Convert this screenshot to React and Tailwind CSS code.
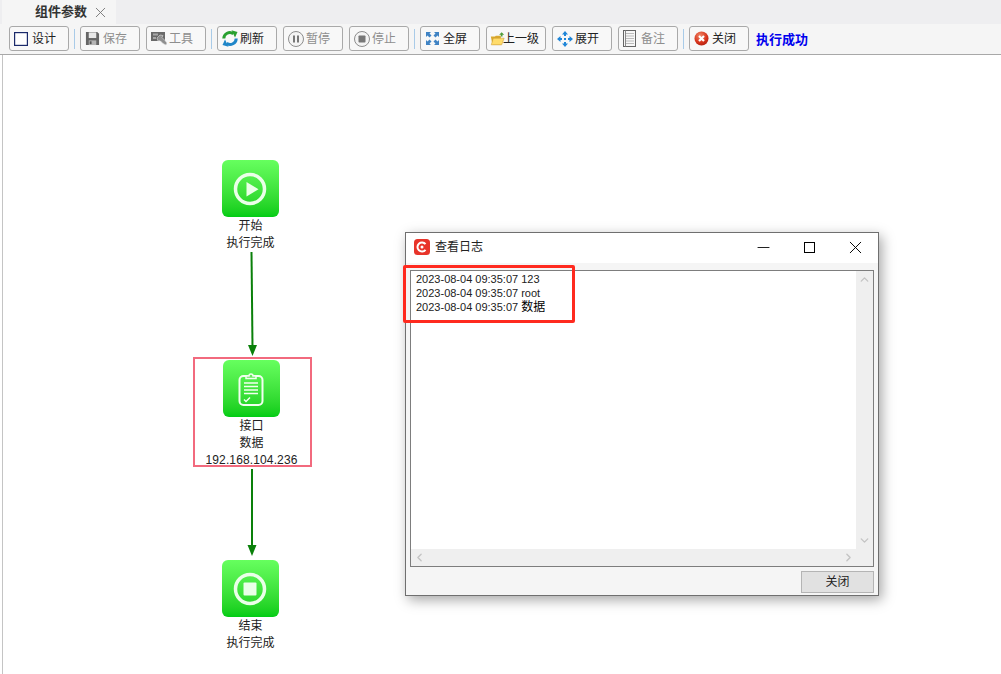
import React from 'react';
import { X, Minus, ChevronUp, ChevronDown, ChevronLeft, ChevronRight } from 'lucide-react';

const font = 'font-["Liberation_Sans","Noto_Sans_CJK_SC",sans-serif]';

const DesignIcon = () => (
  <svg width="14" height="14" viewBox="0 0 14 14" className="shrink-0"><rect x=".6" y=".6" width="12.800" height="12.800" fill="#fff" stroke="#1b2a6b" strokeWidth="1.200" /></svg>
);
const SaveIcon = () => (
  <svg width="15" height="15" viewBox="0 0 16 16" className="shrink-0">
    <path d="M1 1h12l2 2v12H1z" fill="#666" />
    <rect x="4" y="1.500" width="8" height="6" fill="#e8e8e8" />
    <rect x="4" y="10" width="8" height="5" fill="#b5b5b5" />
    <rect x="5" y="11" width="2" height="3" fill="#555" />
  </svg>
);
const ToolsIcon = () => (
  <svg width="16" height="15" viewBox="0 0 16 15" className="shrink-0">
    <path d="M0 1h14v9H0z" fill="#6a6a6a" />
    <path d="M2 2.500h5v2H2zM2 6h3v2H2z" fill="#a8a8a8" />
    <path d="M6 7l3-3 3 .5-1 2 2.500 2.500L16 12l-1 2-3-1.500-3-3-2 .5z" fill="#8f8f8f" stroke="#dedede" strokeWidth=".6" />
  </svg>
);
const RefreshIcon = () => (
  <svg width="16" height="17" viewBox="0 0 16 17" fill="none" className="shrink-0">
    <path d="M1.800 8.500a6 6 0 0 1 9.500-4.800" stroke="#28a02f" strokeWidth="3" />
    <path d="M9.500 .3l6 1.700-2.500 5.500z" fill="#28a02f" />
    <path d="M14.200 8.500a6 6 0 0 1-9.500 4.800" stroke="#1f86c8" strokeWidth="3" />
    <path d="M6.500 16.700l-6-1.700 2.500-5.500z" fill="#1f86c8" />
  </svg>
);
const PauseIcon = () => (
  <svg width="16" height="16" viewBox="0 0 16 16" className="shrink-0">
    <circle cx="8" cy="8" r="7.500" fill="#f4f4f4" stroke="#8d8d8d" />
    <rect x="5" y="4.500" width="2" height="7" fill="#777" />
    <rect x="9" y="4.500" width="2" height="7" fill="#777" />
  </svg>
);
const StopIcon = () => (
  <svg width="16" height="16" viewBox="0 0 16 16" className="shrink-0">
    <circle cx="8" cy="8" r="7.500" fill="#f4f4f4" stroke="#8d8d8d" />
    <rect x="4.500" y="4.500" width="7" height="7" rx=".8" fill="#777" />
  </svg>
);
const FullIcon = () => (
  <svg width="15" height="15" viewBox="0 0 15 15" fill="#3f83c4" className="shrink-0">
    <path d="M1 1h5L4.500 2.500 6.500 4.500 4.500 6.500 2.500 4.500 1 6z" />
    <path d="M14 1v5L12.500 4.500 10.500 6.500 8.500 4.500 10.500 2.500 9 1z" />
    <path d="M1 14V9l1.500 1.500 2-2 2 2-2 2L6 14z" />
    <path d="M14 14H9l1.500-1.500-2-2 2-2 2 2L14 9z" />
  </svg>
);
const FolderIcon = () => (
  <svg width="15" height="16" viewBox="0 0 18 18" className="shrink-0">
    <path d="M1 6h5l1-1h6v11H3z" fill="#d9a92e" />
    <path d="M1.500 16l2.500-8h13l-3 8z" fill="#ffdc6b" stroke="#c9962a" strokeWidth=".6" />
    <path d="M11 4l3-3 3 3h-2v2h-2V4z" fill="#4f9d3a" />
  </svg>
);
const MoveIcon = () => (
  <svg width="16" height="16" viewBox="0 0 16 16" fill="#1f86d8" className="shrink-0">
    <path d="M8 0l3 3.500H5zM8 16l-3-3.500h6zM0 8l3.500-3v6zM16 8l-3.500 3V5z" />
    <rect x="7" y="3" width="2" height="2" />
    <rect x="7" y="11" width="2" height="2" />
    <rect x="3" y="7" width="2" height="2" />
    <rect x="11" y="7" width="2" height="2" />
    <rect x="7" y="7" width="2" height="2" />
  </svg>
);
const NoteIcon = () => (
  <svg width="14" height="17" viewBox="0 0 14 17" fill="none" className="shrink-0">
    <rect x=".5" y=".5" width="12" height="16" fill="#f7f7f7" stroke="#666" />
    <path d="M2 3.500h9M2 6h9M2 8.500h9M2 11h9M2 13.500h9" stroke="#bbb" />
    <path d="M2.500 .5v16" stroke="#888" />
  </svg>
);
const CloseIcon = () => (
  <svg width="15" height="15" viewBox="0 0 15 15" className="shrink-0">
    <defs>
      <radialGradient id="redBall" cx=".4" cy=".3" r=".8"><stop offset="0" stopColor="#f08a6a" /><stop offset=".6" stopColor="#d8341c" /><stop offset="1" stopColor="#a81e10" /></radialGradient>
    </defs>
    <circle cx="7.500" cy="7.500" r="7" fill="url(#redBall)" />
    <path d="M5 5l5 5M10 5l-5 5" stroke="#fff" strokeWidth="2.200" />
  </svg>
);

const tools = [
  { label: '设计', icon: DesignIcon },
  { label: '保存', icon: SaveIcon, off: true, sep: true },
  { label: '工具', icon: ToolsIcon, off: true },
  { label: '刷新', icon: RefreshIcon, sep: true },
  { label: '暂停', icon: PauseIcon, off: true },
  { label: '停止', icon: StopIcon, off: true },
  { label: '全屏', icon: FullIcon, sep: true },
  { label: '上一级', icon: FolderIcon, narrow: true },
  { label: '展开', icon: MoveIcon },
  { label: '备注', icon: NoteIcon, off: true },
  { label: '关闭', icon: CloseIcon, sep: true },
];

function ToolButton({ item }) {
  const Icon = item.icon;
  return (
    <button className={`flex h-[25px] w-[60px] shrink-0 items-center rounded-[3px] border border-[#a9a9a9] bg-[#f8f8f8] pl-[3px] text-[12px] ${item.off ? 'text-[#8e8e8e]' : 'text-[#222]'}`}>
      {/* the label starts at the same offset on every button, except 上一级 */}
      <span className={`flex shrink-0 ${item.narrow ? 'w-[13px]' : 'w-[19px] pl-px'}`}>
        <Icon />
      </span>
      <span>{item.label}</span>
    </button>
  );
}

function Node({ pos, children, lines }) {
  return (
    <div className={`absolute flex w-[110px] flex-col items-center text-[12px] leading-[17px] text-[#222] ${pos}`}>
      <div className="flex h-[57px] w-[57px] items-center justify-center rounded-[6px] bg-gradient-to-b from-[#66ff5e] to-[#00cc14]">
        {children}
      </div>
      <div className="mt-[1px] pl-[1px] text-center">
        {lines.map((l, i) => <div key={i}>{l}</div>)}
      </div>
    </div>
  );
}

export default function App() {
  return (
    <div className={`${font} flex h-[674px] w-[1001px] flex-col overflow-hidden bg-white`}>
      {/* tabs */}
      <div className="flex h-[24px] shrink-0 bg-[#eeeef0] pl-[2px]">
        <div className="flex h-full w-[114px] items-center bg-[#f5f5f5] pl-[33px] text-[13px] font-bold text-[#333]">
          <span>组件参数</span>
          <X size={17} strokeWidth={1.3} className="ml-[5px] text-[#777]" />
        </div>
      </div>

      {/* toolbar */}
      <div className="flex h-[31px] shrink-0 items-start gap-[6px] border-b border-[#a8a8a8] bg-[#f5f5f5] pl-[9px] pt-[2px]">
        {tools.map((t) => (
          <React.Fragment key={t.label}>
            {t.sep && <div className="-mx-px mt-[3px] h-[20px] w-px bg-[#a9cbe8]" />}
            <ToolButton item={t} />
          </React.Fragment>
        ))}
        <span className="ml-px mt-[4px] text-[13px] font-bold text-[#0000ee]">执行成功</span>
      </div>

      {/* canvas */}
      <div className="relative ml-[2px] flex-1 border-l border-[#c4c4c4] bg-white">
        <svg className="absolute left-[-3px] top-[-55px]" width="1001" height="674" fill="none">
          <path d="M251.500 252l1 94" stroke="#0a800a" strokeWidth="2" />
          <path d="M248 345h9l-4.500 11z" fill="#0a800a" />
          <path d="M252 469v77" stroke="#0a800a" strokeWidth="2" />
          <path d="M247.500 545h9l-4.500 11z" fill="#0a800a" />
        </svg>

        <Node pos="left-[192px] top-[105px]" lines={['开始', '执行完成']}>
          <svg width="34" height="34" viewBox="0 0 34 34" fill="none">
            <circle cx="17" cy="17" r="14.500" stroke="#eaffe8" strokeWidth="3.500" />
            <path d="M13.500 10L25.500 17.200l-12 7.300z" fill="#eaffe8" />
          </svg>
        </Node>

        <div className="absolute left-[190px] top-[302px] h-[110px] w-[119px] border-2 border-[#f26a7e]" />
        <Node pos="left-[193px] top-[305px]" lines={['接口', '数据', <span className="tracking-[0.13px]">192.168.104.236</span>]}>
          <svg width="28" height="34" viewBox="0 0 28 34" fill="none" stroke="#f2fff0">
            <rect x="2.500" y="4" width="23" height="29" rx="4" strokeWidth="2" />
            <path d="M9 6.500V4h3a2 2 0 0 1 4 0h3v2.500z" fill="#66e85e" strokeWidth="1.500" />
            <path d="M7 11h14M7 14.500h14M7 18h14M7 21.500h14" strokeWidth="1.500" />
            <path d="M7 27.500l2 2 4-4" strokeWidth="1.500" />
          </svg>
        </Node>

        <Node pos="left-[192px] top-[505px]" lines={['结束', '执行完成']}>
          <svg width="34" height="34" viewBox="0 0 34 34" fill="none">
            <circle cx="17" cy="17" r="14.500" stroke="#eaffe8" strokeWidth="3.500" />
            <rect x="10.500" y="10.500" width="13" height="13" rx="1" fill="#eaffe8" />
          </svg>
        </Node>

        {/* log window */}
        <div className="absolute left-[402px] top-[177px] flex h-[364px] w-[474px] flex-col border border-[#6f6f6f] bg-[#f5f5f5] shadow-[3px_4px_12px_rgba(0,0,0,0.35)]">
          <div className="flex h-[30px] shrink-0 items-center bg-white pb-[2px] pl-[8px] text-[12px] text-[#222]">
            <svg width="16" height="16" viewBox="0 0 16 16" fill="none" className="mr-[5px]">
              <rect width="16" height="16" rx="3.500" fill="#e8342a" />
              <path d="M11.500 5.200a4.500 4.500 0 1 0 0 5.600" stroke="#fff" strokeWidth="2" />
              <circle cx="8" cy="8" r="1.500" fill="#fff" />
            </svg>
            <span>查看日志</span>
            <div className="ml-auto flex items-center">
              <div className="flex w-[46px] justify-center"><Minus size={19} strokeWidth={1.100} className="text-black" /></div>
              <div className="flex w-[46px] justify-center"><div className="h-[11px] w-[11px] border border-black" /></div>
              <div className="flex w-[46px] justify-center"><X size={21} strokeWidth={1.100} className="text-black" /></div>
            </div>
          </div>

          <div className="relative mx-[4px] mt-[7px] flex h-[297px] flex-col border border-[#7d7d7d] bg-white">
            <div className="flex min-h-0 flex-1">
              <div className="flex-1 pl-[5px] pt-[1px] text-[11px] leading-[14px] text-[#222]">
                <div>2023-08-04 09:35:07 123</div>
                <div>2023-08-04 09:35:07 root</div>
                <div>2023-08-04 09:35:07 <span className="text-[12px] text-black">数据</span></div>
              </div>
              <div className="flex w-[17px] flex-col items-center justify-between bg-[#efefef] py-[2px] text-[#c4c4c4]">
                <ChevronUp size={13} strokeWidth={2.500} />
                <ChevronDown size={13} strokeWidth={2.500} />
              </div>
            </div>
            <div className="flex h-[17px] items-center justify-between bg-[#efefef] pl-[2px] pr-[18px] text-[#c4c4c4]">
              <ChevronLeft size={13} strokeWidth={2.500} />
              <ChevronRight size={13} strokeWidth={2.500} />
            </div>
            {/* red highlight */}
            <div className="absolute left-[-8px] top-[-6px] h-[58px] w-[172px] rounded-[2px] border-[3px] border-[#ff2a1f]" />
          </div>

          <div className="mr-[4px] mt-[4px] flex justify-end">
            <button className="h-[22px] w-[73px] border border-[#b4b4b4] bg-[#e1e1e1] text-[12px] text-[#222]">关闭</button>
          </div>
        </div>
      </div>
    </div>
  );
}
